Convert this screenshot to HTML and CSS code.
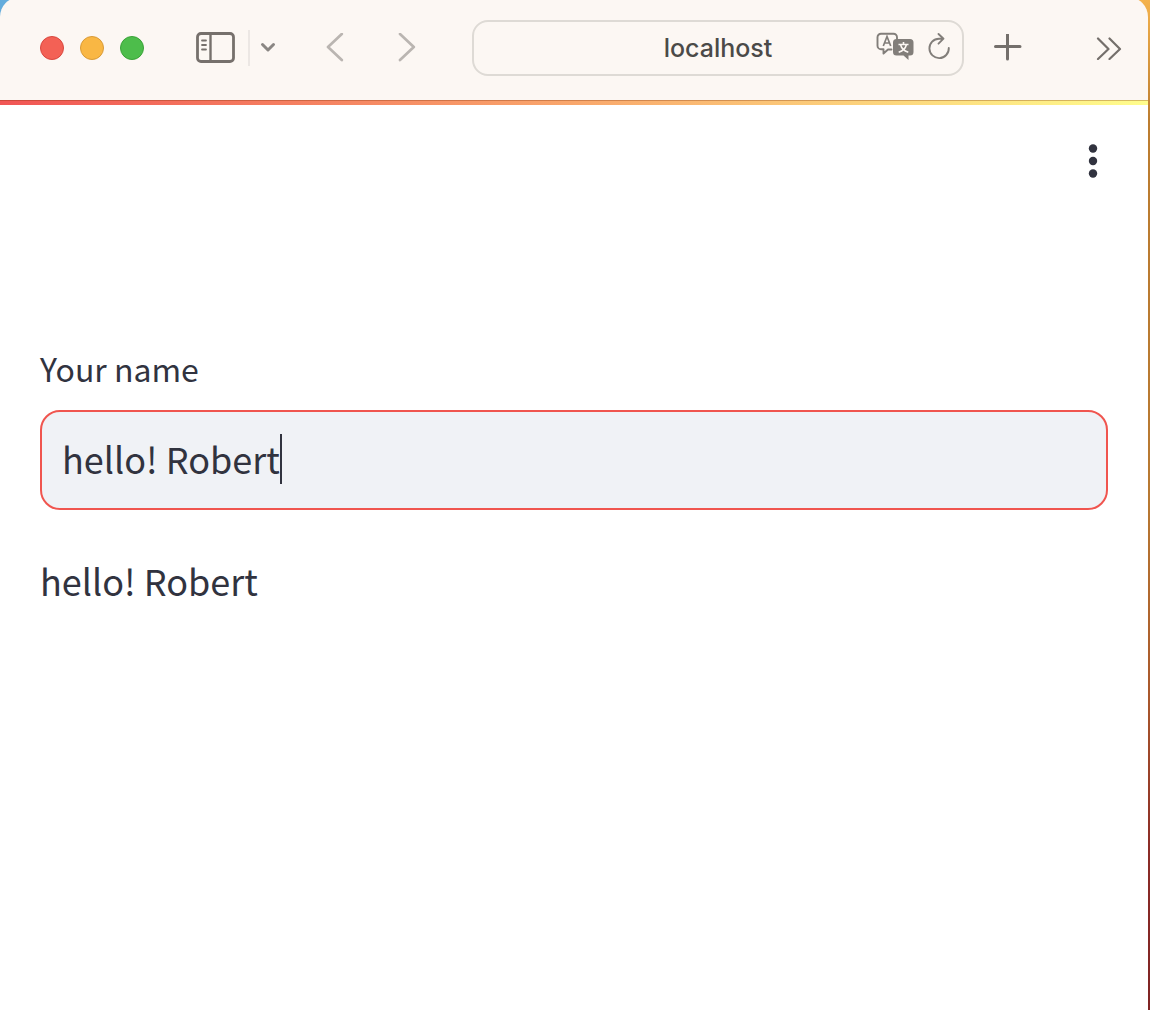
FILE: index.html
```html
<!DOCTYPE html>
<html lang="en">
<head>
<meta charset="utf-8">
<meta name="viewport" content="width=device-width, initial-scale=1">
<title>localhost</title>
<link rel="stylesheet" href="styles.css">
</head>
<body>
<div class="window">
  <header class="toolbar">
    <div class="lights">
      <button class="light light-close" type="button" aria-label="Close"></button>
      <button class="light light-minimize" type="button" aria-label="Minimize"></button>
      <button class="light light-zoom" type="button" aria-label="Zoom"></button>
    </div>
    <div class="sidebar-tools">
      <button class="tool" type="button" aria-label="Show sidebar">
        <svg width="40" height="32" viewBox="0 0 40 32" fill="none" stroke="#76706c">
          <rect x="1.5" y="1.5" width="36" height="28" rx="3.5" stroke-width="2.800"/>
          <path d="M14.500 2v27" stroke-width="2.400"/>
          <path d="M6 8.500h4M6 13h4M6 17.500h4" stroke-width="1.800" stroke-linecap="round"/>
        </svg>
      </button>
      <button class="tool tool-menu" type="button" aria-label="Sidebar options">
        <svg width="16" height="12" viewBox="0 0 16 12" fill="none" stroke="#8a8683" stroke-width="3" stroke-linecap="round" stroke-linejoin="round"><path d="M2.500 2.500 8 8l5.500-5.500"/></svg>
      </button>
    </div>
    <nav class="history" aria-label="History">
      <button class="tool" type="button" aria-label="Back">
        <svg width="18" height="30" viewBox="0 0 18 30" fill="none" stroke="#bab5b1" stroke-width="2.700" stroke-linecap="round" stroke-linejoin="round"><path d="M15.800 1 2 14l13.800 13"/></svg>
      </button>
      <button class="tool" type="button" aria-label="Forward">
        <svg width="18" height="30" viewBox="0 0 18 30" fill="none" stroke="#bab5b1" stroke-width="2.700" stroke-linecap="round" stroke-linejoin="round"><path d="M2 1 15.800 14 2 27"/></svg>
      </button>
    </nav>
    <div class="address">
      <input class="address-input" type="text" value="localhost" aria-label="Address">
      <div class="address-actions">
        <button class="tool" type="button" aria-label="Translate">
          <svg width="38" height="28" viewBox="0 0 38 28" fill="none">
            <path d="M15.500 17.500h-3.500L7.500 21.500V17.200H5A3.500 3.500 0 0 1 1.500 13.700V5.200A3.500 3.500 0 0 1 5 1.700H17.500A3.500 3.500 0 0 1 21 5.200V7" stroke="#827e7a" stroke-width="1.900" stroke-linejoin="round" stroke-linecap="round"/>
            <path d="M7.300 14 11 4.500 14.700 14M8.500 11h5" stroke="#827e7a" stroke-width="1.700"/>
            <path d="M20.500 7H34a3.500 3.500 0 0 1 3.500 3.500v9.500a3.500 3.500 0 0 1-3.500 3.500h-1.500V28L27.500 23.500h-7A3.500 3.500 0 0 1 17 20v-9.500A3.500 3.500 0 0 1 20.500 7Z" fill="#827e7a"/>
            <path d="M22.500 12.500h10M27.500 10v2.500M24.500 12.500c1 4 4 6.500 7.800 7.800M30.500 12.500c-1 4-4 6.500-7.800 7.800" stroke="#fcf7f3" stroke-width="1.600"/>
          </svg>
        </button>
        <button class="tool" type="button" aria-label="Reload">
          <svg width="22" height="28" viewBox="0 0 22 28" fill="none" stroke="#827e7a" stroke-width="1.900" stroke-linecap="round" stroke-linejoin="round"><path d="M20.800 16A9.700 9.700 0 1 1 11 6.700h4M10.500 2 15.500 6.700 10.500 11.700"/></svg>
        </button>
      </div>
    </div>
    <button class="tool tool-new" type="button" aria-label="New tab">
      <svg width="28" height="28" viewBox="0 0 28 28" stroke="#746f6b" stroke-width="3" stroke-linecap="round"><path d="M1.500 12.500h24.500M13.500 0.500v24.500"/></svg>
    </button>
    <button class="tool tool-more" type="button" aria-label="More tools">
      <svg width="26" height="24" viewBox="0 0 26 24" fill="none" stroke="#746f6b" stroke-width="2.200" stroke-linecap="round" stroke-linejoin="round"><path d="M2 2.500 12.500 13 2 23M13.500 2.500 24 13 13.500 23"/></svg>
    </button>
  </header>
  <div class="decoration"></div>
  <main class="app">
    <div class="app-header">
      <button class="tool app-menu" type="button" aria-label="Main menu">
        <svg width="10" height="34" viewBox="0 0 10 34" fill="#31333f"><circle cx="5" cy="4.500" r="4.200"/><circle cx="5" cy="17" r="4.200"/><circle cx="5" cy="29.500" r="4.200"/></svg>
      </button>
    </div>
    <form class="form">
      <label class="label" for="name">Your name</label>
      <div class="field">
        <input class="field-input" id="name" type="text" value="hello! Robert" autocomplete="off">
        <span class="caret"></span>
      </div>
    </form>
    <p class="greeting">hello! Robert</p>
  </main>
</div>
</body>
</html>
```
FILE: styles.css
```css
* {
  box-sizing: border-box;
}

body {
  margin: 0;
  background: linear-gradient(to right, #64acdc 0, #64acdc 50%, transparent 50%),
    linear-gradient(#f4b24c 0, #bc7d30 120px, #b87932 500px, #a9572c 700px, #8b2c27 850px, #7f2424 100%);
  overflow: hidden;
}

.window {
  display: flex;
  flex-direction: column;
  min-height: 100vh;
  margin-right: 2px;
}

.toolbar {
  display: flex;
  align-items: center;
  height: 103px;
  margin-top: -3px;
  padding: 0 26px 1px 40px;
  border-radius: 20px 20px 0 0;
  background: #fcf7f3;
}

.tool {
  display: block;
  flex: none;
  padding: 0;
  border: 0;
  background: none;
}

.tool svg {
  display: block;
}

.lights {
  display: flex;
  gap: 16px;
}

.light {
  width: 24px;
  height: 24px;
  padding: 0;
  border: 1px solid;
  border-radius: 50%;
}

.light-close {
  background: #f36155;
  border-color: #d9483f;
}

.light-minimize {
  background: #f9b744;
  border-color: #d99b38;
}

.light-zoom {
  background: #4dbd4b;
  border-color: #3aa338;
}

.sidebar-tools {
  display: flex;
  align-items: center;
  margin-left: 52px;
}

.tool-menu {
  height: 36px;
  margin-left: 12px;
  padding-left: 10px;
  border-left: 2px solid #ece7e4;
}

.history {
  display: flex;
  gap: 54px;
  margin-left: 50px;
}

.address {
  display: flex;
  flex: 1;
  align-items: center;
  min-width: 0;
  height: 56px;
  margin-left: 56px;
  padding: 0 12px 0 86px;
  border: 2px solid #dedad5;
  border-radius: 16px;
}

.address-input {
  flex: 1;
  min-width: 0;
  padding: 0;
  border: 0;
  outline: 0;
  background: none;
  color: #4b4a48;
  font: 500 25px/32px Inter, "Liberation Sans", sans-serif;
  text-align: center;
}

.address-actions {
  display: flex;
  gap: 14px;
  padding-bottom: 4px;
}

.tool-new {
  margin-left: 30px;
}

.tool-more {
  margin-left: 74px;
}

.decoration {
  height: 5px;
  border-top: 1px solid rgba(120, 40, 0, 0.3);
  background: linear-gradient(to right, #f15655, #f9a76c 50%, #fffd8c) border-box;
}

.app {
  flex: 1;
  padding: 39px 40px 0;
  background: #fff;
  color: #31333f;
  font: 36px/60px "Noto Sans CJK JP", "Noto Sans", sans-serif;
}

.app-header {
  display: flex;
  justify-content: flex-end;
  height: 200px;
  padding-right: 10px;
}

.app-menu {
  height: 34px;
}

.label {
  display: block;
  height: 66px;
  font-size: 32px;
  line-height: 48px;
}

.field {
  position: relative;
  height: 100px;
  border: 2px solid #f0554f;
  border-radius: 20px;
  background: #f0f2f6;
}

.field-input {
  display: block;
  width: 100%;
  height: 100%;
  padding: 0 20px 4px;
  border: 0;
  outline: 0;
  background: none;
  color: inherit;
  font: inherit;
}

.caret {
  position: absolute;
  top: 22px;
  left: 238px;
  width: 2px;
  height: 50px;
  background: #31333f;
}

.greeting {
  margin: 40px 0 0;
}
```
